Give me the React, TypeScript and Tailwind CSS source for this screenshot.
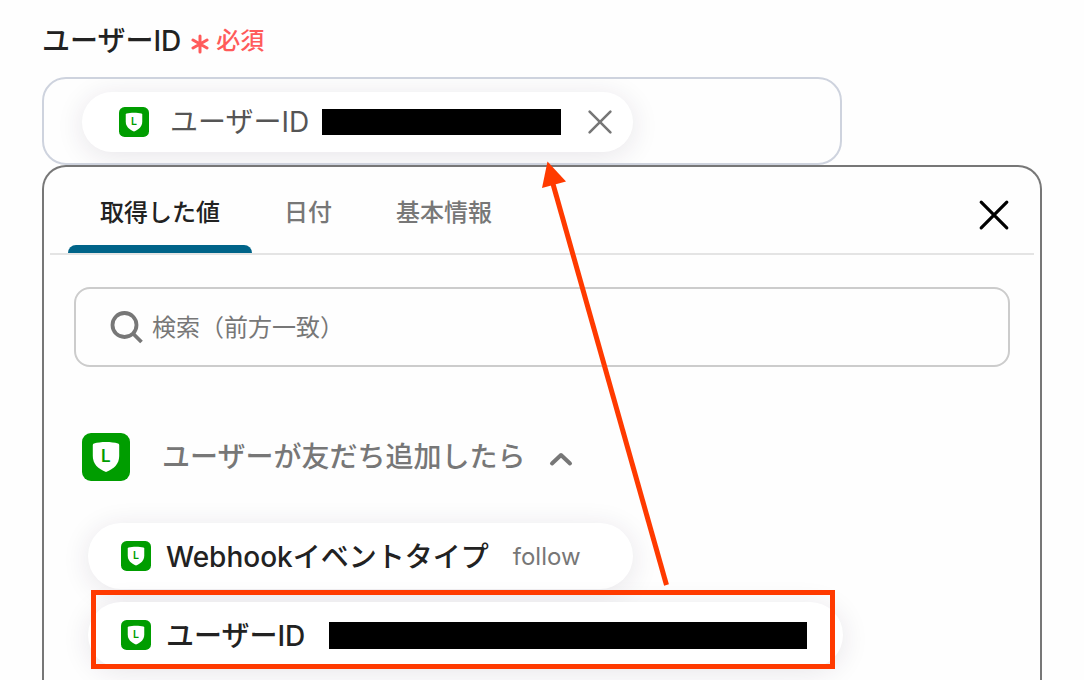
import { useState } from 'react';

const TABS = ['取得した値', '日付', '基本情報'];

function AppIcon({ className }: { className: string }) {
  return (
    <svg viewBox="0 0 48 48" className={`shrink-0 ${className}`} aria-hidden="true">
      <rect width="48" height="48" rx="9" fill="#009d00" />
      <path d="M24 9c4.500 0 8.600.5 12 1.500.8.300 1.200.8 1.200 1.600V23c0 8-5.400 13-13.200 16C16.200 36 10.800 31 10.800 23V12.100c0-.8.400-1.300 1.200-1.600C15.400 9.500 19.500 9 24 9z" fill="#fff" />
      <text x="19" y="28.500" fontSize="17" fontWeight="600" fontFamily="Inter, sans-serif" fill="#009d00">L</text>
    </svg>
  );
}

function CrossIcon({ className, strokeWidth }: { className: string; strokeWidth: number }) {
  return (
    <svg viewBox="0 0 30 30" className={className} fill="none" stroke="currentColor" strokeWidth={strokeWidth} strokeLinecap="round" aria-hidden="true">
      <path d="M3 3l24 24M27 3L3 27" />
    </svg>
  );
}

export default function App() {
  const [tab, setTab] = useState(TABS[0]);
  const [open, setOpen] = useState(true);

  return (
    <main className="relative flex min-h-screen flex-col overflow-hidden bg-[#fefefe] px-[42px] pt-[21px] font-['Inter','Noto_Sans_CJK_JP',sans-serif] text-[#222]">
      {/* Field label */}
      <div className="flex h-10 items-center text-[28px] leading-10 font-medium">
        <h1>ユーザーID</h1>
        <svg viewBox="0 0 18 20" className="mt-1.5 ml-2.5 h-5 w-[18px]" fill="none" stroke="#ff5a5a" strokeWidth="3" strokeLinecap="round" aria-hidden="true">
          <path d="M9 2v16M2 6l14 8M16 6L2 14" />
        </svg>
        <span className="ml-[7px] text-2xl text-[#ff5a5a]">必須</span>
      </div>

      {/* Selected value */}
      <div className="mt-4 flex h-22 w-4/5 items-center overflow-hidden rounded-3xl border-2 border-[#ced3de] pt-0.5 pl-[38px]">
        <div className="flex h-15 items-center rounded-full bg-white pr-5 pl-[37px] shadow-[0_4px_28px_rgba(50,30,60,0.11)]">
          <AppIcon className="size-[30px]" />
          <span className="ml-[21px] text-[28px] leading-10 text-[#555]">ユーザーID</span>
          <span className="ml-[13px] h-[26px] w-[239px] bg-black" />
          <button type="button" aria-label="削除" className="ml-[26px] text-[#777]">
            <CrossIcon className="size-[26px]" strokeWidth={3} />
          </button>
        </div>
      </div>

      {/* Value picker */}
      <section className="flex-1 rounded-t-3xl border-2 border-b-0 border-[#777] bg-[#fefefe]">
        <div className="mx-1.5 flex h-22 justify-between border-b-2 border-[#e4e4e4] pr-6 pl-[18px]">
          <div role="tablist" className="flex">
            {TABS.map((name) => (
              <button
                key={name}
                type="button"
                role="tab"
                aria-selected={tab === name}
                onClick={() => setTab(name)}
                className={`flex flex-col text-2xl font-medium ${tab === name ? 'text-[#222]' : 'text-[#777]'}`}
              >
                <span className="flex flex-1 items-center px-8 pt-3.5">{name}</span>
                <span className={`h-2 w-full rounded-t-lg ${tab === name ? 'bg-[#006489]' : ''}`} />
              </button>
            ))}
          </div>
          <button type="button" aria-label="閉じる" className="mt-2.5 text-black">
            <CrossIcon className="size-8" strokeWidth={3} />
          </button>
        </div>

        <label className="mx-[30px] mt-8 flex h-20 items-center rounded-2xl border-2 border-[#ccc] pr-8 pl-[34px] text-[#777]">
          <svg viewBox="0 0 34 34" className="size-[34px] shrink-0" fill="none" stroke="currentColor" strokeWidth="3.800" aria-hidden="true">
            <circle cx="14.500" cy="15" r="12" />
            <path d="M23 23.500l8.500 8.500" />
          </svg>
          <input
            type="text"
            aria-label="検索"
            placeholder="検索（前方一致）"
            className="ml-2 min-w-0 flex-1 bg-transparent pt-0.5 text-2xl outline-none placeholder:text-[#777]"
          />
        </label>

        <button
          type="button"
          aria-expanded={open}
          onClick={() => setOpen(!open)}
          className="mt-[66px] ml-[38px] flex items-center text-[28px] leading-10 font-medium text-[#777]"
        >
          <AppIcon className="size-12" />
          <span className="ml-8">ユーザーが友だち追加したら</span>
          <svg viewBox="0 0 24 16" className="mt-1 ml-6 h-4 w-6" fill="none" stroke="currentColor" strokeWidth="4" strokeLinecap="round" strokeLinejoin="round" aria-hidden="true">
            <path d="M3 12.500L12 4l9 8.500" />
          </svg>
        </button>

        {open && (
          <ul className="mt-[42px] ml-11 flex flex-col items-start gap-[13px] text-[28px] leading-10 font-medium">
            <li className="flex h-[66px] items-center rounded-full bg-white pr-13 pl-[33px] shadow-[0_4px_28px_rgba(50,30,60,0.11)]">
              <AppIcon className="size-[30px]" />
              <span className="ml-[15px] pt-0.5">Webhookイベントタイプ</span>
              <span className="ml-6 pt-0.5 text-2xl font-normal text-[#777]">follow</span>
            </li>
            <li className="relative flex h-[66px] items-center rounded-full bg-white pr-9 pl-[33px] shadow-[0_4px_28px_rgba(50,30,60,0.11)]">
              <AppIcon className="size-[30px]" />
              <span className="ml-[15px] pt-0.5">ユーザーID</span>
              <span className="ml-6 h-[27px] w-[478px] bg-black" />
              <span className="absolute -top-3 right-2 -bottom-px left-[3px] border-5 border-[#ff3a00]" />
            </li>
          </ul>
        )}
      </section>

      {/* Annotation arrow */}
      <svg viewBox="0 0 130 430" className="pointer-events-none absolute top-[160px] left-[540px] h-[430px] w-[130px]" aria-hidden="true">
        <path d="M126.500 425L13 24" stroke="#ff3a00" strokeWidth="5" />
        <path d="M7.500 1.500L26 21.500 2 28z" fill="#ff3a00" />
      </svg>
    </main>
  );
}
